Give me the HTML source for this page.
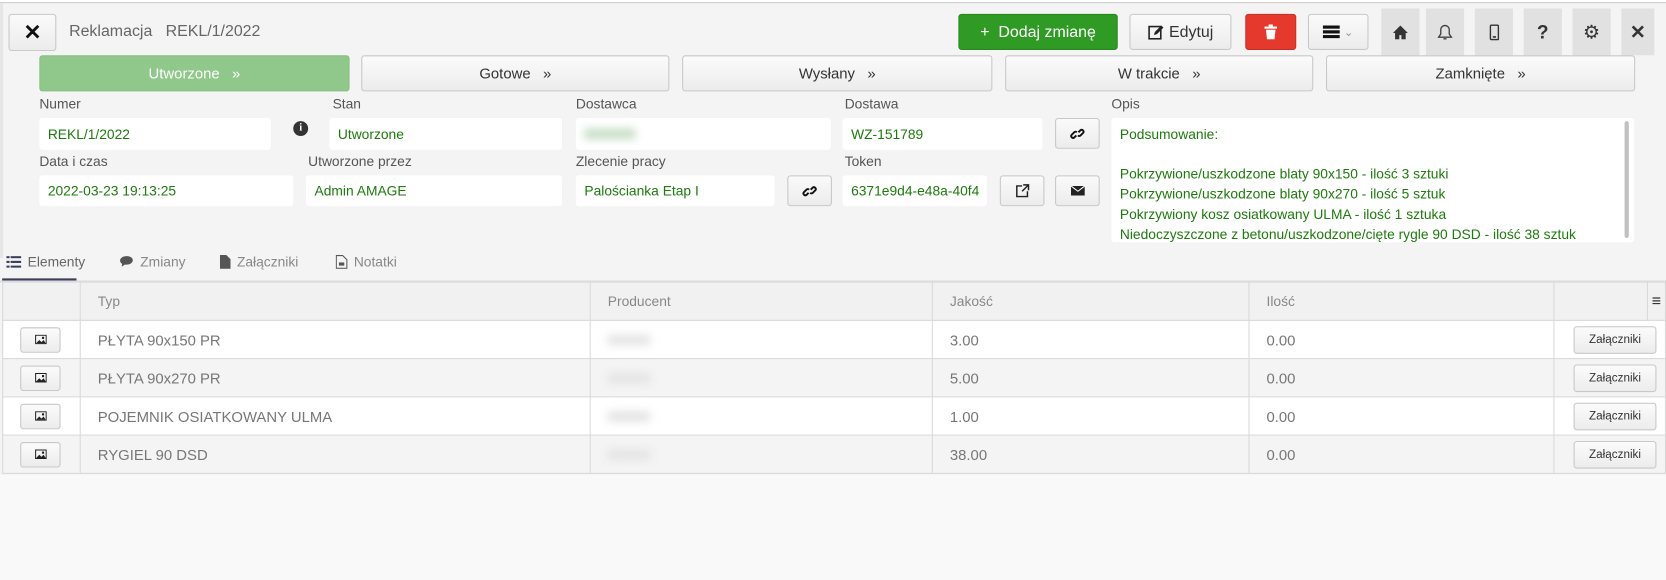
<!DOCTYPE html>
<html><head><meta charset="utf-8"><style>
*{box-sizing:border-box;margin:0;padding:0}
html,body{width:1666px;height:580px;overflow:hidden;background:#f9f9f9;font-family:"Liberation Sans",sans-serif}
#w{position:absolute;left:0;top:0;width:1568px;height:546px;transform:scale(1.0625);transform-origin:0 0;background:#f4f4f4}
.a{position:absolute}
.btn{position:absolute;background:linear-gradient(#fafafa,#ececec);border:1px solid #c8c8c8;border-radius:3px;display:flex;align-items:center;justify-content:center;color:#333;font-size:14px}
.lbl{position:absolute;font-size:13px;color:#555}
.inp{position:absolute;background:#fff;border-radius:3px;font-size:13px;color:#1d7a0c;padding-left:8px;display:flex;align-items:center}
.ic{position:absolute;top:8px;width:36px;height:44px;background:#e1e1e1;display:flex;align-items:center;justify-content:center}
.st{position:absolute;top:52px;height:34px;font-size:14px;color:#333;border:1px solid #c8c8c8;border-radius:3px;background:linear-gradient(#fbfbfb,#ececec);display:flex;align-items:center;justify-content:center}
.tab{position:absolute;top:238px;height:16px;font-size:13px;color:#888;display:flex;align-items:center;gap:6px}
table{position:absolute;left:2px;top:265px;width:1566px;border-collapse:collapse;font-size:14px;color:#777}
td,th{border:1px solid #d9d9d9;height:36px;text-align:left;font-weight:normal;padding-left:16px}
th{background:#f1f1f1;color:#888;font-size:13px}
tr:nth-child(odd) td{background:#f4f4f4}
tr:nth-child(even) td{background:#fff}
.zb{width:78px;height:26px;font-size:11px;color:#333;border:1px solid #c8c8c8;border-radius:3px;background:linear-gradient(#fbfbfb,#ececec);display:flex;align-items:center;justify-content:center;margin-left:1px}
.pb{width:38px;height:24px;border:1px solid #c8c8c8;border-radius:3px;background:linear-gradient(#fbfbfb,#ececec);display:flex;align-items:center;justify-content:center;margin-left:16px}
.blur{display:inline-block;width:40px;height:10px;background:#e4e4e4;filter:blur(4px)}
</style></head><body><div id="w">
<div class="a" style="left:0;top:0;width:1568px;height:2px;background:#fff"></div>
<div class="a" style="left:0;top:2px;width:1568px;height:1px;background:#ccc"></div>
<div class="a" style="left:0;top:3px;width:3px;height:240px;background:#e6e6e6"></div>
<div class="btn" style="left:8px;top:13px;width:45px;height:35px;font-size:20px;font-weight:bold;color:#111">✕</div>
<div class="a" style="left:65px;top:21px;font-size:15px;color:#666">Reklamacja&nbsp;&nbsp; REKL/1/2022</div>
<div class="btn" style="left:902px;top:13px;width:150px;height:34px;background:#2f9a24;border-color:#268a1e;color:#fff;font-size:15px">+&nbsp; Dodaj zmianę</div>
<div class="btn" style="left:1063px;top:13px;width:96px;height:34px;font-size:15px"><svg width="16" height="16" viewBox="0 0 16 16"><rect x="1.5" y="3" width="11" height="11.5" fill="none" stroke="#222" stroke-width="1.5"/><path d="M6 11l1-3 6-6 2 2-6 6z" fill="#222"/></svg>&nbsp;Edytuj</div>
<div class="btn" style="left:1172px;top:13px;width:48px;height:34px;background:#e4392c;border-color:#c93025;color:#fff"><svg width="12" height="14" viewBox="0 0 12 14"><rect x="0" y="2" width="12" height="2" fill="#fff"/><rect x="4" y="0" width="4" height="2" fill="#fff"/><path d="M1.5 5h9l-1 9h-7z" fill="#fff"/></svg></div>
<div class="btn" style="left:1231px;top:13px;width:57px;height:34px"><svg width="16" height="12"><rect y="0" width="16" height="3" fill="#111"/><rect y="4.5" width="16" height="3" fill="#111"/><rect y="9" width="16" height="3" fill="#111"/></svg>&nbsp;<span style="color:#999;font-size:11px">⌄</span></div>
<div class="ic" style="left:1300px"><svg width="14" height="13"><path d="M7 0L0 7h2v6h4V9h2v4h4V7h2z" fill="#333"/></svg></div>
<div class="ic" style="left:1342px"><svg width="14" height="15"><path d="M7 1a4 4 0 0 0-4 4v4l-2 3h12l-2-3V5a4 4 0 0 0-4-4z" fill="none" stroke="#444" stroke-width="1.3"/><path d="M5.5 13.5h3" stroke="#444" stroke-width="1.3"/></svg></div>
<div class="ic" style="left:1388px"><svg width="9" height="15"><rect x="0.7" y="0.7" width="7.6" height="13.6" rx="1" fill="none" stroke="#333" stroke-width="1.4"/><rect x="3" y="11" width="3" height="1.5" fill="#333"/></svg></div>
<div class="ic" style="left:1434px;font-size:18px;font-weight:bold;color:#333">?</div>
<div class="ic" style="left:1480px;font-size:18px;color:#333">⚙</div>
<div class="ic" style="left:1526px;width:31px;font-size:18px;font-weight:bold;color:#333">✕</div>
<div class="st" style="left:37px;width:292px;background:#8fc88a;border-color:#86c081;color:#fff">Utworzone&nbsp;&nbsp; »</div>
<div class="st" style="left:340px;width:290px">Gotowe&nbsp;&nbsp; »</div>
<div class="st" style="left:642px;width:292px">Wysłany&nbsp;&nbsp; »</div>
<div class="st" style="left:946px;width:290px">W trakcie&nbsp;&nbsp; »</div>
<div class="st" style="left:1248px;width:291px">Zamknięte&nbsp;&nbsp; »</div>
<div class="lbl" style="left:37px;top:90px">Numer</div>
<div class="lbl" style="left:313px;top:90px">Stan</div>
<div class="lbl" style="left:542px;top:90px">Dostawca</div>
<div class="lbl" style="left:795px;top:90px">Dostawa</div>
<div class="lbl" style="left:1046px;top:90px">Opis</div>
<div class="inp" style="left:37px;top:111px;width:218px;height:30px">REKL/1/2022</div>
<div class="a" style="left:276px;top:114px;width:14px;height:14px;border-radius:50%;background:#333;color:#fff;font-size:10px;font-weight:bold;text-align:center;line-height:14px;font-family:'Liberation Serif',serif">i</div>
<div class="inp" style="left:310px;top:111px;width:219px;height:30px">Utworzone</div>
<div class="inp" style="left:542px;top:111px;width:240px;height:30px"><span class="blur" style="background:#c6dec6;width:48px"></span></div>
<div class="inp" style="left:793px;top:111px;width:188px;height:30px">WZ-151789</div>
<div class="btn" style="left:993px;top:111px;width:42px;height:29px"><svg width="14" height="14" viewBox="0 0 14 14"><g fill="none" stroke="#111" stroke-width="1.8"><path d="M6 8.5l-2 2a1.8 1.8 0 0 1-2.5-2.5l2.5-2.5a1.8 1.8 0 0 1 2.5 0"/><path d="M8 5.5l2-2a1.8 1.8 0 0 1 2.5 2.5l-2.5 2.5a1.8 1.8 0 0 1-2.5 0"/></g></svg></div>
<div class="a" style="left:1046px;top:111px;width:492px;height:117px;background:#fff;border-radius:3px;padding:7px 8px;font-size:13px;color:#1d7a0c;line-height:18.7px">Podsumowanie:<br><br>Pokrzywione/uszkodzone blaty 90x150 - ilość 3 sztuki<br>Pokrzywione/uszkodzone blaty 90x270 - ilość 5 sztuk<br>Pokrzywiony kosz osiatkowany ULMA - ilość 1 sztuka<br>Niedoczyszczone z betonu/uszkodzone/cięte rygle 90 DSD - ilość 38 sztuk</div>
<div class="a" style="left:1529px;top:114px;width:4px;height:110px;background:#c1c1c1;border-radius:2px"></div>
<div class="lbl" style="left:37px;top:144px">Data i czas</div>
<div class="lbl" style="left:290px;top:144px">Utworzone przez</div>
<div class="lbl" style="left:542px;top:144px">Zlecenie pracy</div>
<div class="lbl" style="left:795px;top:144px">Token</div>
<div class="inp" style="left:37px;top:165px;width:239px;height:29px">2022-03-23 19:13:25</div>
<div class="inp" style="left:288px;top:165px;width:241px;height:29px">Admin AMAGE</div>
<div class="inp" style="left:542px;top:165px;width:187px;height:29px">Palościanka Etap I</div>
<div class="btn" style="left:741px;top:165px;width:42px;height:29px"><svg width="14" height="14" viewBox="0 0 14 14"><g fill="none" stroke="#111" stroke-width="1.8"><path d="M6 8.5l-2 2a1.8 1.8 0 0 1-2.5-2.5l2.5-2.5a1.8 1.8 0 0 1 2.5 0"/><path d="M8 5.5l2-2a1.8 1.8 0 0 1 2.5 2.5l-2.5 2.5a1.8 1.8 0 0 1-2.5 0"/></g></svg></div>
<div class="inp" style="left:793px;top:165px;width:136px;height:29px;overflow:hidden;white-space:nowrap">6371e9d4-e48a-40f4</div>
<div class="btn" style="left:941px;top:165px;width:42px;height:29px"><svg width="13" height="13"><path d="M6 2H1v10h10V7" fill="none" stroke="#222" stroke-width="1.4"/><path d="M7 1h5v5M12 1L6 7" fill="none" stroke="#222" stroke-width="1.4"/></svg></div>
<div class="btn" style="left:993px;top:165px;width:42px;height:29px"><svg width="13" height="9"><rect width="13" height="9" fill="#222"/><path d="M0 0l6.5 5L13 0" fill="none" stroke="#fff" stroke-width="1"/></svg></div>
<div class="tab" style="left:6px;color:#666"><svg width="14" height="11"><g fill="#3c3c5c"><rect width="3" height="2"/><rect x="4" width="10" height="2"/><rect y="4.5" width="3" height="2"/><rect x="4" y="4.5" width="10" height="2"/><rect y="9" width="3" height="2"/><rect x="4" y="9" width="10" height="2"/></g></svg>Elementy</div>
<div class="a" style="left:2px;top:262px;width:70px;height:2px;background:#3c3c5c"></div>
<div class="tab" style="left:112px"><svg width="14" height="12" viewBox="0 0 14 12"><path d="M7 1C3.5 1 1 3 1 5.3c0 1.3.8 2.4 2 3.1L2.5 11l3-2c.5.1 1 .1 1.5.1 3.5 0 6-2 6-4.3S10.5 1 7 1z" fill="#555"/></svg>Zmiany</div>
<div class="tab" style="left:207px"><svg width="10" height="13"><path d="M0 0h6l4 4v9H0z" fill="#555"/></svg>Załączniki</div>
<div class="tab" style="left:316px"><svg width="11" height="13"><path d="M.5 .5h6l4 4v8h-10z" fill="none" stroke="#555"/><rect x="3" y="7" width="5" height="3" fill="#555"/></svg>Notatki</div>
<div class="a" style="left:0;top:264px;width:1568px;height:2px;background:#ddd"></div>
<table>
<tr><th style="width:73px"></th><th style="width:480px">Typ</th><th style="width:322px">Producent</th><th style="width:298px">Jakość</th><th style="width:287px">Ilość</th><th style="width:88px"></th><th style="padding:0;text-align:center;color:#333;font-size:15px">≡</th></tr>
<tr><td style="padding:0"><div class="pb"><svg width="11" height="9"><rect x=".5" y=".5" width="10" height="8" fill="none" stroke="#222"/><path d="M1 8l3-3 2 2 2-2 2 3z" fill="#222"/><rect x="6.5" y="2" width="2" height="2" fill="#222"/></svg></div></td><td>PŁYTA 90x150 PR</td><td><span class="blur"></span></td><td>3.00</td><td>0.00</td><td colspan="2" style="padding-left:17px"><div class="zb">Załączniki</div></td></tr>
<tr><td style="padding:0"><div class="pb"><svg width="11" height="9"><rect x=".5" y=".5" width="10" height="8" fill="none" stroke="#222"/><path d="M1 8l3-3 2 2 2-2 2 3z" fill="#222"/><rect x="6.5" y="2" width="2" height="2" fill="#222"/></svg></div></td><td>PŁYTA 90x270 PR</td><td><span class="blur"></span></td><td>5.00</td><td>0.00</td><td colspan="2" style="padding-left:17px"><div class="zb">Załączniki</div></td></tr>
<tr><td style="padding:0"><div class="pb"><svg width="11" height="9"><rect x=".5" y=".5" width="10" height="8" fill="none" stroke="#222"/><path d="M1 8l3-3 2 2 2-2 2 3z" fill="#222"/><rect x="6.5" y="2" width="2" height="2" fill="#222"/></svg></div></td><td>POJEMNIK OSIATKOWANY ULMA</td><td><span class="blur"></span></td><td>1.00</td><td>0.00</td><td colspan="2" style="padding-left:17px"><div class="zb">Załączniki</div></td></tr>
<tr><td style="padding:0"><div class="pb"><svg width="11" height="9"><rect x=".5" y=".5" width="10" height="8" fill="none" stroke="#222"/><path d="M1 8l3-3 2 2 2-2 2 3z" fill="#222"/><rect x="6.5" y="2" width="2" height="2" fill="#222"/></svg></div></td><td>RYGIEL 90 DSD</td><td><span class="blur"></span></td><td>38.00</td><td>0.00</td><td colspan="2" style="padding-left:17px"><div class="zb">Załączniki</div></td></tr>
</table>
<div class="a" style="left:0;top:447px;width:1568px;height:99px;background:#f9f9f9"></div>
</div></body></html>
